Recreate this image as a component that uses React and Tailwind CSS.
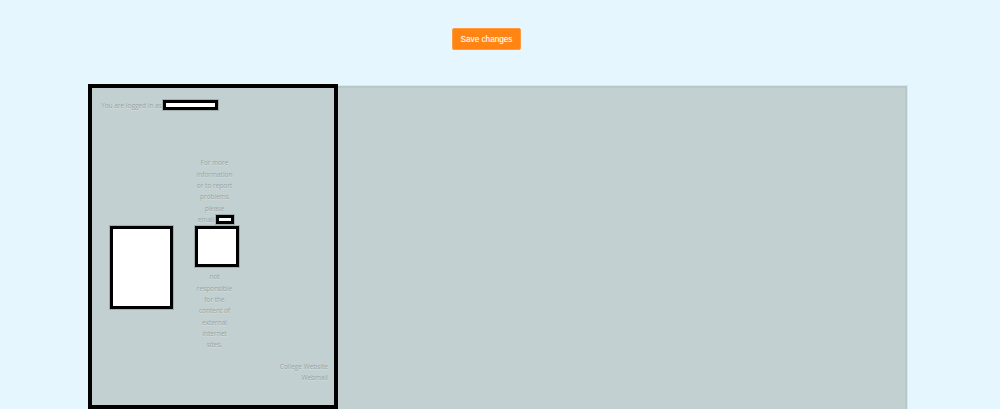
const Redacted = ({ className }) => (
  <span className={`inline-block bg-white border-black shadow-[0_0_0_1px_rgba(60,70,70,0.25)] ${className}`}></span>
);

const MiddleColumn = () => (
  <div className="w-[43px] ml-[20px] flex flex-col items-center text-center">
    <p>For more</p>
    <p>information</p>
    <p>or to report</p>
    <p>problems</p>
    <p>please</p>
    <p className="flex items-center gap-[2px] whitespace-nowrap ml-[3px] h-[11.33px]">
      email
      <Redacted className="w-[18px] h-[9px] border-[3px] shrink-0" />
    </p>
    <Redacted className="w-[44px] h-[41px] border-[3px] self-start ml-[2px] mt-[1px] mb-[4px] shrink-0" />
    <p>not</p>
    <p>responsible</p>
    <p>for the</p>
    <p>content of</p>
    <p>external</p>
    <p>internet</p>
    <p>sites.</p>
  </div>
);

const Sidebar = () => (
  <div className="w-[250px] h-[325px] -mt-[4px] border-[4px] border-black font-['Open_Sans',sans-serif] text-[6.5px] leading-[11.33px] text-[#9aa2a2] [text-shadow:0_1px_0_rgba(255,255,255,0.35)] flex flex-col">
    <div className="flex items-start ml-[9px] mt-[11px] gap-[1px]">
      <span className="pt-[1px]">You are logged in as</span>
      <Redacted className="w-[55px] h-[10px] border-[3px] mt-[1px]" />
    </div>
    <div className="flex items-start ml-[18px] mt-[46px]">
      <Redacted className="w-[63px] h-[83px] border-[3px] mt-[69px] shrink-0" />
      <MiddleColumn />
    </div>
    <div className="mt-[10.5px] mr-[6px] text-right">
      <p>College Website</p>
      <p>Webmail</p>
    </div>
  </div>
);

export default function App() {
  return (
    <div className="h-[409px] overflow-hidden bg-[#e5f6ff]">
      <div className="pt-[28px] pl-[452px]">
        <button className="block w-[69px] h-[22px] pt-[2px] rounded-[2px] bg-[#ff8412] border border-[#ff9a3d] text-white text-[8.2px] font-['Liberation_Sans',sans-serif] [text-shadow:0_0_1px_rgba(255,255,255,0.3)]">
          Save changes
        </button>
      </div>
      <div className="ml-[88px] mt-[36px] w-[819px] h-[330px] bg-[#c2d0d1] border-t-2 border-r-2 border-[#b5c9c9] shadow-[1px_-1px_0_#d6e8ec]">
        <Sidebar />
      </div>
    </div>
  );
}
